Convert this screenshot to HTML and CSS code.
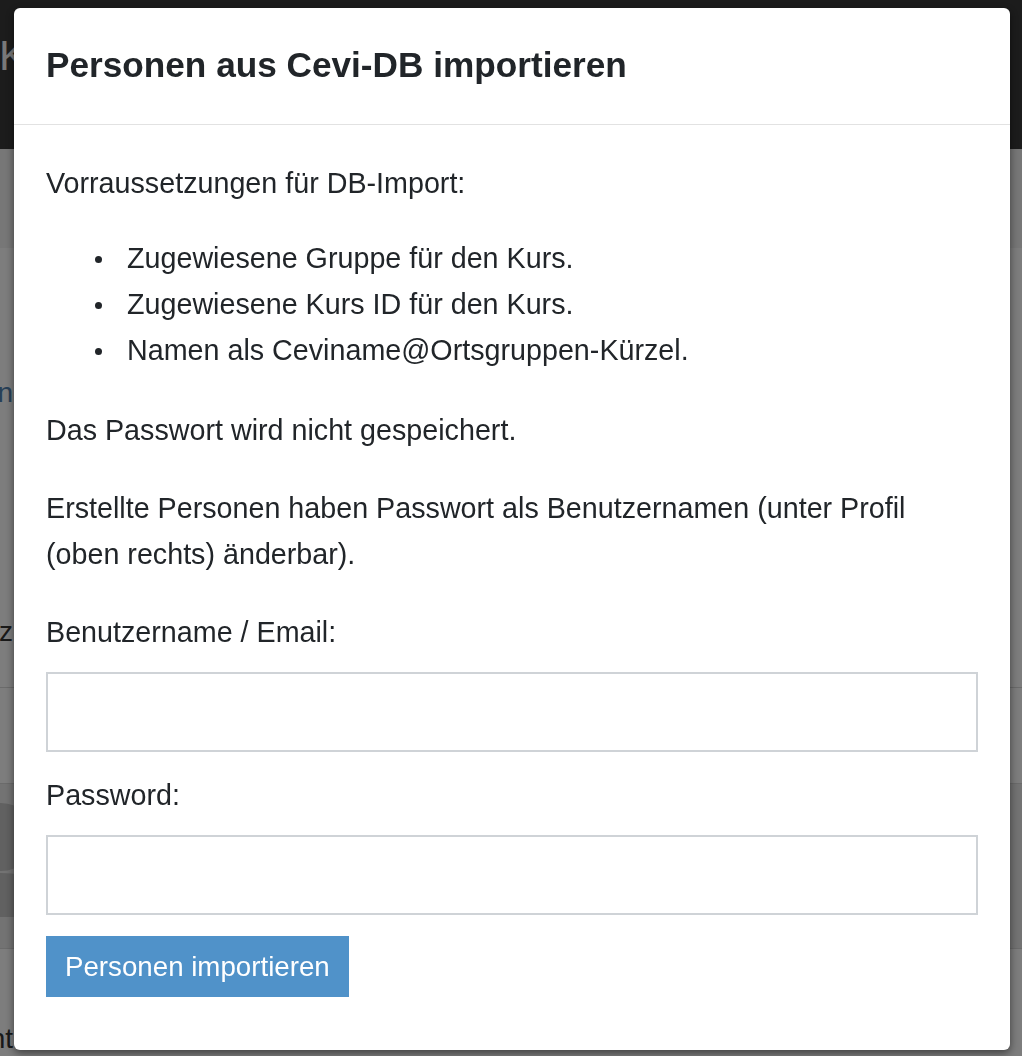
FILE: index.html
```html
<!DOCTYPE html>
<html lang="de">
<head>
<meta charset="utf-8">
<title>Personen aus Cevi-DB importieren</title>
<link rel="stylesheet" href="styles.css">
</head>
<body>
<div class="page">
  <header class="navbar"><span class="brand">K</span></header>
  <div class="subbar"></div>
  <main class="content">
    <div class="row row-a">
      <div class="edge">
        <a class="link line-1">Teilnehmer hinzufügen</a>
        <span class="word line-2">Kompetenz</span>
      </div>
    </div>
    <div class="row row-b"></div>
    <div class="row row-c">
      <div class="edge">
        <svg class="avatar" width="120" height="120" viewBox="0 0 120 120" aria-hidden="true">
          <circle cx="60" cy="40" r="34" fill="#c2c2c2"/>
          <path d="M8 120 C8 88 30 76 60 76 C90 76 112 88 112 120 Z" fill="#c2c2c2"/>
        </svg>
      </div>
    </div>
    <div class="row row-d">
      <div class="edge"><span class="word line-3">Student</span></div>
    </div>
  </main>
</div>
<div class="backdrop"></div>
<div class="modal-wrap">
  <div class="modal" role="dialog">
    <div class="modal-header">
      <h4 class="modal-title">Personen aus Cevi-DB importieren</h4>
    </div>
    <div class="modal-body">
      <p class="intro">Vorraussetzungen für DB-Import:</p>
      <ul class="req-list">
        <li>Zugewiesene Gruppe für den Kurs.</li>
        <li>Zugewiesene Kurs ID für den Kurs.</li>
        <li>Namen als Ceviname@Ortsgruppen-Kürzel.</li>
      </ul>
      <p>Das Passwort wird nicht gespeichert.</p>
      <p>Erstellte Personen haben Passwort als Benutzernamen (unter Profil (oben rechts) änderbar).</p>
      <form class="import-form">
        <div class="field">
          <label for="user">Benutzername / Email:</label>
          <input id="user" type="text">
        </div>
        <div class="field">
          <label for="pw">Password:</label>
          <input id="pw" type="password">
        </div>
        <button type="button" class="btn-primary">Personen importieren</button>
      </form>
    </div>
  </div>
</div>
</body>
</html>
```
FILE: styles.css
```css
* { box-sizing: border-box; }

html, body {
  margin: 0;
  height: 100%;
}

body {
  font-family: "Liberation Sans", Arial, Helvetica, sans-serif;
  background: #fafafa;
  overflow: hidden;
}

/* background page */
.navbar {
  height: 149px;
  background: #383838;
  color: #f2f2f2;
  font-size: 42px;
  line-height: 42px;
  padding-top: 35px;
  white-space: nowrap;
}

.brand {
  display: inline-block;
  margin-left: -1px;
}

.subbar {
  height: 99px;
  background: #eeeeee;
}

.row {
  display: flex;
  border-bottom: 1px solid #d6d6d6;
}

.row-a { height: 440px; }
.row-b { height: 96px; }
.row-c { height: 165px; background: #e6e6e6; }
.row-d { height: 107px; border-bottom: 0; overflow: hidden; }

.edge {
  width: 13px;
  display: flex;
  flex-direction: column;
  align-items: flex-end;
  white-space: nowrap;
  font-size: 28px;
  line-height: 32px;
}

.edge > * { flex: none; }

.link { color: #4f7fae; }
.word { color: #333333; }

.line-1 { margin-top: 129px; }
.line-2 { margin-top: 207px; }
.line-3 { margin-top: 74px; }

.avatar { margin-top: 13px; margin-right: -48px; }

.backdrop {
  position: fixed;
  inset: 0;
  background: rgba(0, 0, 0, 0.5);
}

/* modal */
.modal-wrap {
  position: fixed;
  inset: 0;
  padding: 8px 12px 0 14px;
}

.modal {
  width: 996px;
  background: #ffffff;
  border-radius: 6px;
  box-shadow: 0 3px 9px rgba(0, 0, 0, 0.5);
  color: #212529;
}

.modal-header {
  padding: 34px 32px 36px;
  border-bottom: 1px solid #e2e2e2;
}

.modal-title {
  margin: 0;
  font-size: 35.2px;
  line-height: 46px;
  font-weight: 700;
}

.modal-body {
  padding: 35px 32px 53px;
  font-size: 28.7px;
  line-height: 46px;
}

.modal-body p { margin: 0 0 32px; }
.modal-body p.intro { margin-bottom: 29px; }

.req-list {
  margin: 0 0 34px;
  padding-left: 81px;
  list-style: none;
}

.req-list li {
  display: flex;
}

.req-list li::before {
  content: "";
  flex: none;
  width: 7px;
  height: 7px;
  border-radius: 50%;
  background: currentColor;
  margin: 21px 25px 0 -32px;
}

.field { margin-bottom: 20px; }
.field:last-of-type { margin-bottom: 21px; }

.field label {
  display: block;
  margin-bottom: 17px;
}

.field input {
  display: block;
  width: 100%;
  height: 80px;
  border: 2px solid #cfd3d7;
  border-radius: 0;
  background: #ffffff;
  font: inherit;
  padding: 0 20px;
}

.btn-primary {
  display: block;
  height: 61px;
  padding: 0 19px;
  border: 0;
  border-radius: 0;
  background: #5092c9;
  color: #ffffff;
  font-family: inherit;
  font-size: 27.7px;
  line-height: 46px;
}
```
